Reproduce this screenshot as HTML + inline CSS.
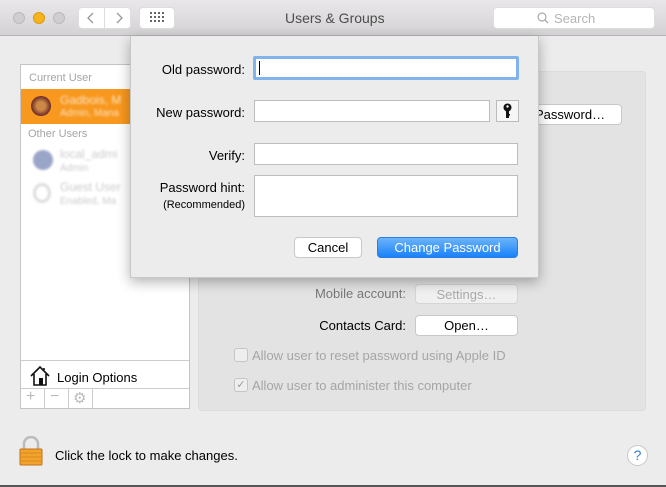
<!DOCTYPE html>
<html><head><style>
*{box-sizing:border-box;margin:0;padding:0}
body{width:666px;height:487px;overflow:hidden;background:#ececec;font-family:"Liberation Sans",sans-serif;font-size:13px;color:#000;position:relative}
.a{position:absolute}
.tb{left:0;top:0;width:666px;height:36px;background:linear-gradient(#e9e7e9,#d4d2d4);border-bottom:1px solid #b5b3b5}
.dot{width:12px;height:12px;border-radius:50%;top:12px;background:#d0ced0;border:1px solid #bbb}
.btn{background:#fff;border:1px solid #c8c8c8;border-radius:4px}
.field{background:#fff;border:1px solid #bdbdbd}
.lbl{text-align:right;font-size:13px}
</style></head><body>
<div class="a tb"></div>
<div class="a dot" style="left:13px"></div>
<div class="a dot" style="left:33px;background:#f6b31c;border-color:#dd9b10"></div>
<div class="a dot" style="left:53px"></div>
<div class="a btn" style="left:78px;top:7px;width:53px;height:22px;border-color:#ddd"></div>
<div class="a" style="left:104px;top:8px;width:1px;height:20px;background:#ddd"></div>
<svg class="a" style="left:86px;top:11px" width="40" height="14"><path d="M7 2 L2 7 L7 12" fill="none" stroke="#999" stroke-width="1.3"/><path d="M31 2 L36 7 L31 12" fill="none" stroke="#999" stroke-width="1.3"/></svg>
<div class="a btn" style="left:139px;top:7px;width:36px;height:22px;border-color:#ddd"></div>
<svg class="a" style="left:150px;top:12px" width="14" height="11"><g fill="#666"><rect x="0" y="0" width="2" height="2"/><rect x="4" y="0" width="2" height="2"/><rect x="8" y="0" width="2" height="2"/><rect x="12" y="0" width="2" height="2"/><rect x="0" y="4" width="2" height="2"/><rect x="4" y="4" width="2" height="2"/><rect x="8" y="4" width="2" height="2"/><rect x="12" y="4" width="2" height="2"/><rect x="0" y="8" width="2" height="2"/><rect x="4" y="8" width="2" height="2"/><rect x="8" y="8" width="2" height="2"/><rect x="12" y="8" width="2" height="2"/></g></svg>
<div class="a" style="left:285px;top:10px;color:#4d4d4d;font-size:14px">Users &amp; Groups</div>
<div class="a btn" style="left:493px;top:7px;width:162px;height:22px;border-color:#ddd"></div>
<svg class="a" style="left:537px;top:12px" width="12" height="12"><circle cx="5" cy="5" r="4" fill="none" stroke="#aaa" stroke-width="1.2"/><line x1="8" y1="8" x2="11" y2="11" stroke="#aaa" stroke-width="1.3"/></svg>
<div class="a" style="left:554px;top:11px;color:#b5b5b5;font-size:13px">Search</div>

<div class="a" style="left:20px;top:64px;width:170px;height:345px;background:#fff;border:1px solid #c4c4c4"></div>
<div class="a" style="left:29px;top:72px;color:#a5a5a5;font-size:11px">Current User</div>
<div class="a" style="left:21px;top:89px;width:168px;height:35px;background:#f8981e"></div>
<div class="a" style="left:31px;top:96px;width:20px;height:20px;border-radius:50%;background:radial-gradient(#c84 30%,#6a2a2a 70%,#4a6a3a)"></div>
<div class="a" style="left:60px;top:93px;color:#fde3c0;font-size:12px;filter:blur(1px)">Gadbois, M</div>
<div class="a" style="left:60px;top:108px;color:#fde3c0;font-size:10px;filter:blur(1px)">Admin, Mana</div>
<div class="a" style="left:28px;top:128px;color:#a5a5a5;font-size:11px">Other Users</div>
<div class="a" style="left:33px;top:150px;width:20px;height:20px;border-radius:50%;background:#9aa6c8;filter:blur(1px)"></div>
<div class="a" style="left:60px;top:147px;color:#ccc;font-size:12px;filter:blur(1px)">local_admi</div>
<div class="a" style="left:60px;top:163px;color:#ccc;font-size:10px;filter:blur(1px)">Admin</div>
<div class="a" style="left:33px;top:183px;width:18px;height:20px;border-radius:50%;border:3px solid #ddd;filter:blur(1px)"></div>
<div class="a" style="left:60px;top:180px;color:#ccc;font-size:12px;filter:blur(1px)">Guest User</div>
<div class="a" style="left:60px;top:196px;color:#ccc;font-size:10px;filter:blur(1px)">Enabled, Ma</div>
<div class="a" style="left:21px;top:360px;width:168px;height:1px;background:#ccc"></div>
<svg class="a" style="left:29px;top:365px" width="22" height="22"><path d="M2 11 L11 2 L20 11 M5 9 V20 H17 V9 M15 5 V3" fill="none" stroke="#111" stroke-width="1.6"/><rect x="10" y="13" width="4" height="7" fill="#111"/></svg>
<div class="a" style="left:57px;top:370px;font-size:13px">Login Options</div>
<div class="a" style="left:21px;top:388px;width:168px;height:1px;background:#ccc"></div>
<div class="a" style="left:44px;top:389px;width:1px;height:19px;background:#ccc"></div>
<div class="a" style="left:68px;top:389px;width:1px;height:19px;background:#ccc"></div>
<div class="a" style="left:92px;top:389px;width:1px;height:19px;background:#ccc"></div>
<div class="a" style="left:26px;top:388px;color:#bbb;font-size:16px">+</div>
<div class="a" style="left:50px;top:388px;color:#bbb;font-size:16px">&minus;</div>
<div class="a" style="left:73px;top:389px;color:#bbb;font-size:15px">&#x2699;</div>

<div class="a" style="left:198px;top:71px;width:448px;height:340px;background:#e3e3e3;border-radius:4px;border:1px solid #dcdcdc"></div>
<div class="a btn" style="left:525px;top:104px;width:97px;height:21px"></div>
<div class="a" style="left:535px;top:107px">Password…</div>
<div class="a lbl" style="left:230px;top:286px;width:176px;color:#777">Mobile account:</div>
<div class="a btn" style="left:415px;top:284px;width:103px;height:20px;background:#f0f0f0;border-color:#d5d5d5;color:#aaa;text-align:center;padding-top:2px">Settings…</div>
<div class="a lbl" style="left:230px;top:318px;width:176px">Contacts Card:</div>
<div class="a btn" style="left:415px;top:315px;width:103px;height:21px;text-align:center;padding-top:2px">Open…</div>
<div class="a" style="left:234px;top:348px;width:14px;height:14px;border:1px solid #c5c5c5;border-radius:3px;background:#eee"></div>
<div class="a" style="left:252px;top:348px;color:#a5a5a5">Allow user to reset password using Apple ID</div>
<div class="a" style="left:234px;top:378px;width:14px;height:14px;border:1px solid #c5c5c5;border-radius:3px;background:#eee;color:#999;font-size:11px;line-height:12px;text-align:center">✓</div>
<div class="a" style="left:252px;top:378px;color:#a5a5a5">Allow user to administer this computer</div>

<svg class="a" style="left:18px;top:436px" width="26" height="30"><path d="M6 13 V8 a7 7 0 0 1 14 0 V13" fill="none" stroke="#bbb" stroke-width="2.5"/><rect x="2" y="13" width="22" height="16" rx="1" fill="#f2a32c" stroke="#c4701a"/><g stroke="#d98a20"><line x1="3" y1="17" x2="23" y2="17"/><line x1="3" y1="21" x2="23" y2="21"/><line x1="3" y1="25" x2="23" y2="25"/></g></svg>
<div class="a" style="left:55px;top:448px">Click the lock to make changes.</div>
<div class="a" style="left:627px;top:445px;width:21px;height:21px;border-radius:50%;background:#fff;border:1px solid #c8c8c8;color:#2d7be0;text-align:center;font-size:14px;line-height:19px">?</div>
<div class="a" style="left:0;top:485px;width:666px;height:2px;background:#555"></div>

<div class="a" style="left:130px;top:36px;width:409px;height:242px;background:#ececec;border:1px solid #c8c8c8;border-top:none;box-shadow:0 4px 12px rgba(0,0,0,.3)"></div>
<div class="a lbl" style="left:130px;top:62px;width:115px">Old password:</div>
<div class="a field" style="left:253px;top:56px;width:266px;height:24px;border:3px solid #82b3ec;border-radius:2px"></div>
<div class="a" style="left:259px;top:61px;width:1px;height:14px;background:#000"></div>
<div class="a lbl" style="left:130px;top:105px;width:115px">New password:</div>
<div class="a field" style="left:254px;top:100px;width:236px;height:22px"></div>
<div class="a" style="left:496px;top:100px;width:23px;height:22px;border:1px solid #bbb;background:#f6f6f6"></div>
<svg class="a" style="left:502px;top:103px" width="11" height="16"><circle cx="5.5" cy="4.5" r="4" fill="#111"/><circle cx="5.5" cy="3.5" r="1.2" fill="#fff"/><rect x="4" y="7" width="3" height="8" fill="#111"/><rect x="6" y="11" width="2" height="1.5" fill="#111"/></svg>
<div class="a lbl" style="left:130px;top:148px;width:115px">Verify:</div>
<div class="a field" style="left:254px;top:143px;width:264px;height:22px"></div>
<div class="a lbl" style="left:130px;top:180px;width:115px">Password hint:</div>
<div class="a lbl" style="left:130px;top:199px;width:115px;font-size:11px">(Recommended)</div>
<div class="a field" style="left:254px;top:175px;width:264px;height:42px"></div>
<div class="a btn" style="left:294px;top:237px;width:68px;height:21px;text-align:center;padding-top:2px">Cancel</div>
<div class="a" style="left:377px;top:237px;width:141px;height:21px;border-radius:4px;background:linear-gradient(#6cb3fa,#1a82fb);border:1px solid #2a7ee0;color:#fff;text-align:center;padding-top:2px">Change Password</div>
</body></html>
